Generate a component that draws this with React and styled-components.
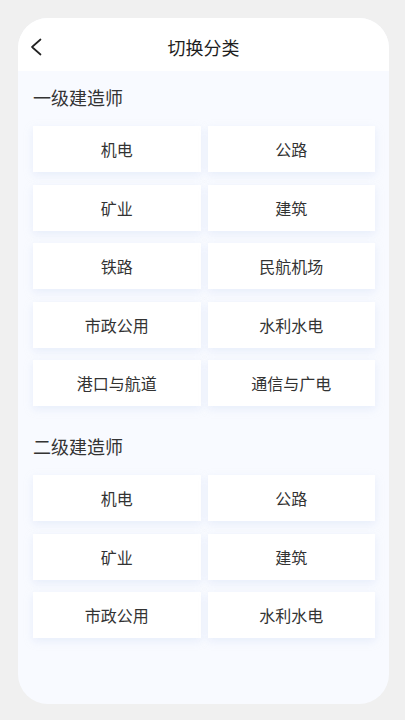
import React from "react";
import styled, { createGlobalStyle } from "styled-components";

const sections = [
  {
    title: "一级建造师",
    items: ["机电", "公路", "矿业", "建筑", "铁路", "民航机场", "市政公用", "水利水电", "港口与航道", "通信与广电"],
  },
  {
    title: "二级建造师",
    items: ["机电", "公路", "矿业", "建筑", "市政公用", "水利水电"],
  },
];

function App() {
  return (
    <Page>
      <GlobalStyle />
      <Card>
        <Header>
          <BackButton aria-label="返回">
            <svg width="12" height="18" viewBox="0 0 12 18" fill="none">
              <path d="M10.5 1.5L2 9l8.5 7.5" stroke="#222" strokeWidth="1.7" strokeLinecap="round" strokeLinejoin="round" />
            </svg>
          </BackButton>
          <Title>切换分类</Title>
        </Header>
        <Body>
          {sections.map((s) => (
            <Section key={s.title}>
              <SectionTitle>{s.title}</SectionTitle>
              <Grid>
                {s.items.map((item, i) => (
                  <Option key={i}>{item}</Option>
                ))}
              </Grid>
            </Section>
          ))}
        </Body>
      </Card>
    </Page>
  );
}

export default App;

const GlobalStyle = createGlobalStyle`
  html, body {
    margin: 0;
    padding: 0;
    background: #f0f0f0;
    font-family: "Noto Sans CJK SC", "Noto Sans", sans-serif;
  }
`;

const Page = styled.div`
  width: 405px;
  height: 720px;
  box-sizing: border-box;
  padding: 18px 16px 16px 18px;
  background: #f0f0f0;
`;

const Card = styled.div`
  height: 686px;
  border-radius: 30px;
  overflow: hidden;
  background: #f8faff;
  display: flex;
  flex-direction: column;
`;

const Header = styled.div`
  height: 53px;
  background: #fff;
  display: flex;
  align-items: center;
  justify-content: center;
  position: relative;
`;

const BackButton = styled.button`
  position: absolute;
  left: 12px;
  top: 20px;
  border: 0;
  background: none;
  padding: 0;
  display: flex;
`;

const Title = styled.div`
  font-size: 18px;
  color: #1f1f1f;
  line-height: 1;
  padding-top: 4px;
`;

const Body = styled.div`
  padding: 16px 14px 0 15px;
  display: flex;
  flex-direction: column;
  gap: 30px;
`;

const Section = styled.div`
  display: flex;
  flex-direction: column;
`;

const SectionTitle = styled.div`
  font-size: 18px;
  color: #333;
  line-height: 20px;
  margin: 0 0 19px;
`;

const Grid = styled.div`
  display: grid;
  grid-template-columns: 1fr 1fr;
  column-gap: 7px;
  row-gap: 12.5px;
`;

const Option = styled.div`
  height: 46px;
  background: #fff;
  display: flex;
  align-items: center;
  justify-content: center;
  font-size: 16px;
  color: #333;
  box-shadow: 0 3px 8px rgba(200, 215, 240, 0.35);
`;
